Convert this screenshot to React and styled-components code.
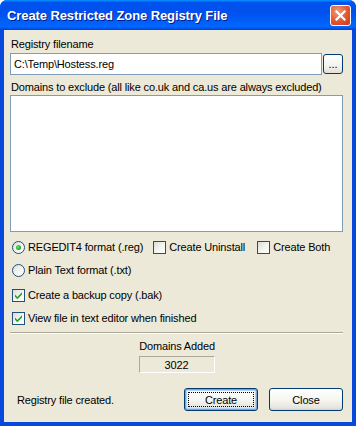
import React, { useState } from 'react';
import styled, { createGlobalStyle } from 'styled-components';

const GlobalStyle = createGlobalStyle`
  html, body {
    margin: 0;
    padding: 0;
    background: #ffffff;
  }
  * {
    box-sizing: border-box;
  }
`;

const Window = styled.div`
  width: 356px;
  height: 426px;
  display: flex;
  flex-direction: column;
  background: #0848dc;
  border-radius: 7px 7px 0 0;
  overflow: hidden;
  font-family: 'Liberation Sans', Arial, sans-serif;
  font-size: 11px;
  letter-spacing: -0.15px;
  color: #000000;
`;

const TitleBar = styled.div`
  height: 30px;
  flex: none;
  display: flex;
  align-items: center;
  justify-content: space-between;
  padding: 0 5px 0 7px;
  background: linear-gradient(
    180deg,
    #0997ff 0%,
    #0053ee 8%,
    #0050ee 40%,
    #0066ff 88%,
    #0058ee 94%,
    #003dd7 100%
  );
`;

const Title = styled.h1`
  margin: 0;
  padding-top: 1px;
  font-family: 'Liberation Sans', Arial, sans-serif;
  font-size: 13px;
  font-weight: bold;
  color: #ffffff;
  text-shadow: 1px 1px 0 #0a1883;
  letter-spacing: -0.1px;
`;

const CloseButton = styled.button`
  width: 21px;
  height: 21px;
  padding: 0;
  border: 1px solid #ffffff;
  border-radius: 3px;
  background: radial-gradient(circle at 35% 30%, #f19b7a 0%, #e2562f 55%, #c7391b 100%);
  display: flex;
  align-items: center;
  justify-content: center;
`;

const Body = styled.div`
  flex: 1;
  margin: 0 4px 4px 4px;
  background: #ece9d8;
  padding: 8px 9px 0 6px;
  display: flex;
  flex-direction: column;
`;

const Label = styled.div`
  line-height: 13px;
  padding-left: ${(p) => p.indent || 1}px;
  margin-top: ${(p) => p.top || 0}px;
  text-align: ${(p) => (p.center ? 'center' : 'left')};
`;

const FileRow = styled.div`
  display: flex;
  align-items: center;
  gap: 1px;
  margin-top: 2px;
`;

const TextInput = styled.div`
  flex: 1;
  height: 22px;
  border: 1px solid #7f9db9;
  background: #ffffff;
  padding: 0 3px;
  display: flex;
  align-items: center;
`;

const Browse = styled.button`
  width: 20px;
  height: 20px;
  padding: 0 0 4px 0;
  border: 1px solid #003c74;
  border-radius: 3px;
  background: linear-gradient(180deg, #ffffff 0%, #f3f3ef 60%, #e2e0d6 100%);
  font-family: 'Liberation Sans', Arial, sans-serif;
  font-size: 11px;
  color: #000000;
  line-height: 10px;
  display: flex;
  align-items: flex-end;
  justify-content: center;
`;

const TextArea = styled.div`
  height: 137px;
  margin-top: 1px;
  border: 1px solid #7f9db9;
  background: #ffffff;
`;

const OptionRow = styled.div`
  display: flex;
  align-items: center;
  height: 20px;
  margin-top: ${(p) => p.top || 0}px;
  padding-left: 2px;
`;

const Option = styled.label`
  display: flex;
  align-items: center;
  gap: 3px;
  margin-right: ${(p) => p.gap || 0}px;
  white-space: nowrap;
`;

const Radio = styled.span`
  width: 13px;
  height: 13px;
  border-radius: 50%;
  border: 1px solid #1c5180;
  background: linear-gradient(135deg, #dcdcd6 0%, #f5f5f2 55%, #ffffff 100%);
  display: flex;
  align-items: center;
  justify-content: center;
  flex: none;
`;

const Dot = styled.span`
  width: 5px;
  height: 5px;
  border-radius: 50%;
  background: radial-gradient(circle at 40% 40%, #6ee06e 0%, #21a121 70%);
`;

const Box = styled.span`
  width: 13px;
  height: 13px;
  border: 1px solid #1c5180;
  background: linear-gradient(135deg, #dcdcd6 0%, #f5f5f2 55%, #ffffff 100%);
  display: flex;
  align-items: center;
  justify-content: center;
  flex: none;
`;

const Separator = styled.div`
  height: 2px;
  margin-top: 4px;
  border-top: 1px solid #aca899;
  border-bottom: 1px solid #ffffff;
`;

const CountBox = styled.div`
  width: 76px;
  height: 17px;
  margin: 3px auto 0;
  border-top: 1px solid #aca899;
  border-left: 1px solid #aca899;
  border-bottom: 1px solid #ffffff;
  border-right: 1px solid #ffffff;
  display: flex;
  align-items: center;
  justify-content: center;
`;

const Footer = styled.div`
  display: flex;
  align-items: center;
  margin-top: 15px;
  padding-left: 7px;
`;

const Status = styled.div`
  flex: 1;
`;

const Button = styled.button`
  width: 74px;
  height: 23px;
  margin-left: ${(p) => p.gap || 0}px;
  border: 1px solid #003c74;
  border-radius: 3px;
  background: linear-gradient(180deg, #ffffff 0%, #f4f4f0 55%, #e6e4dc 90%, #d6d0c5 100%);
  font-family: 'Liberation Sans', Arial, sans-serif;
  font-size: 11px;
  letter-spacing: -0.15px;
  color: #000000;
  padding: 0;
  position: relative;
  box-shadow: ${(p) =>
    p.primary ? 'inset 0 0 0 1px #7da2ce, inset 0 0 0 2px #b9d1f1' : 'none'};

  &::after {
    content: '';
    display: ${(p) => (p.primary ? 'block' : 'none')};
    position: absolute;
    inset: 3px;
    border: 1px dotted #000000;
  }
`;

const Check = () => (
  <svg width="9" height="9" viewBox="0 0 9 9">
    <path d="M1 3.6 L3.3 6 L8 1.2 L8 3.4 L3.3 8.2 L1 5.8 Z" fill="#21a121" />
  </svg>
);

const CloseX = () => (
  <svg width="11" height="11" viewBox="0 0 11 11">
    <path d="M1.5 1.5 L9.5 9.5 M9.5 1.5 L1.5 9.5" stroke="#ffffff" strokeWidth="2.2" strokeLinecap="square" />
  </svg>
);

export default function App() {
  const [format] = useState('reg');
  const [uninstall] = useState(false);
  const [both] = useState(false);
  const [backup] = useState(true);
  const [view] = useState(true);

  return (
    <>
      <GlobalStyle />
      <Window>
        <TitleBar>
          <Title>Create Restricted Zone Registry File</Title>
          <CloseButton aria-label="Close">
            <CloseX />
          </CloseButton>
        </TitleBar>
        <Body>
          <Label indent={1}>Registry filename</Label>
          <FileRow>
            <TextInput>C:\Temp\Hostess.reg</TextInput>
            <Browse>...</Browse>
          </FileRow>
          <Label top={6}>Domains to exclude (all like co.uk and ca.us are always excluded)</Label>
          <TextArea />
          <OptionRow top={5}>
            <Option gap={10}>
              <Radio>{format === 'reg' && <Dot />}</Radio>
              REGEDIT4 format (.reg)
            </Option>
            <Option gap={12}>
              <Box>{uninstall && <Check />}</Box>
              Create Uninstall
            </Option>
            <Option>
              <Box>{both && <Check />}</Box>
              Create Both
            </Option>
          </OptionRow>
          <OptionRow top={3}>
            <Option>
              <Radio>{format === 'txt' && <Dot />}</Radio>
              Plain Text format (.txt)
            </Option>
          </OptionRow>
          <OptionRow top={5}>
            <Option>
              <Box>{backup && <Check />}</Box>
              Create a backup copy (.bak)
            </Option>
          </OptionRow>
          <OptionRow top={3}>
            <Option>
              <Box>{view && <Check />}</Box>
              View file in text editor when finished
            </Option>
          </OptionRow>
          <Separator />
          <Label center top={6}>Domains Added</Label>
          <CountBox>3022</CountBox>
          <Footer>
            <Status>Registry file created.</Status>
            <Button primary>Create</Button>
            <Button gap={11}>Close</Button>
          </Footer>
        </Body>
      </Window>
    </>
  );
}
